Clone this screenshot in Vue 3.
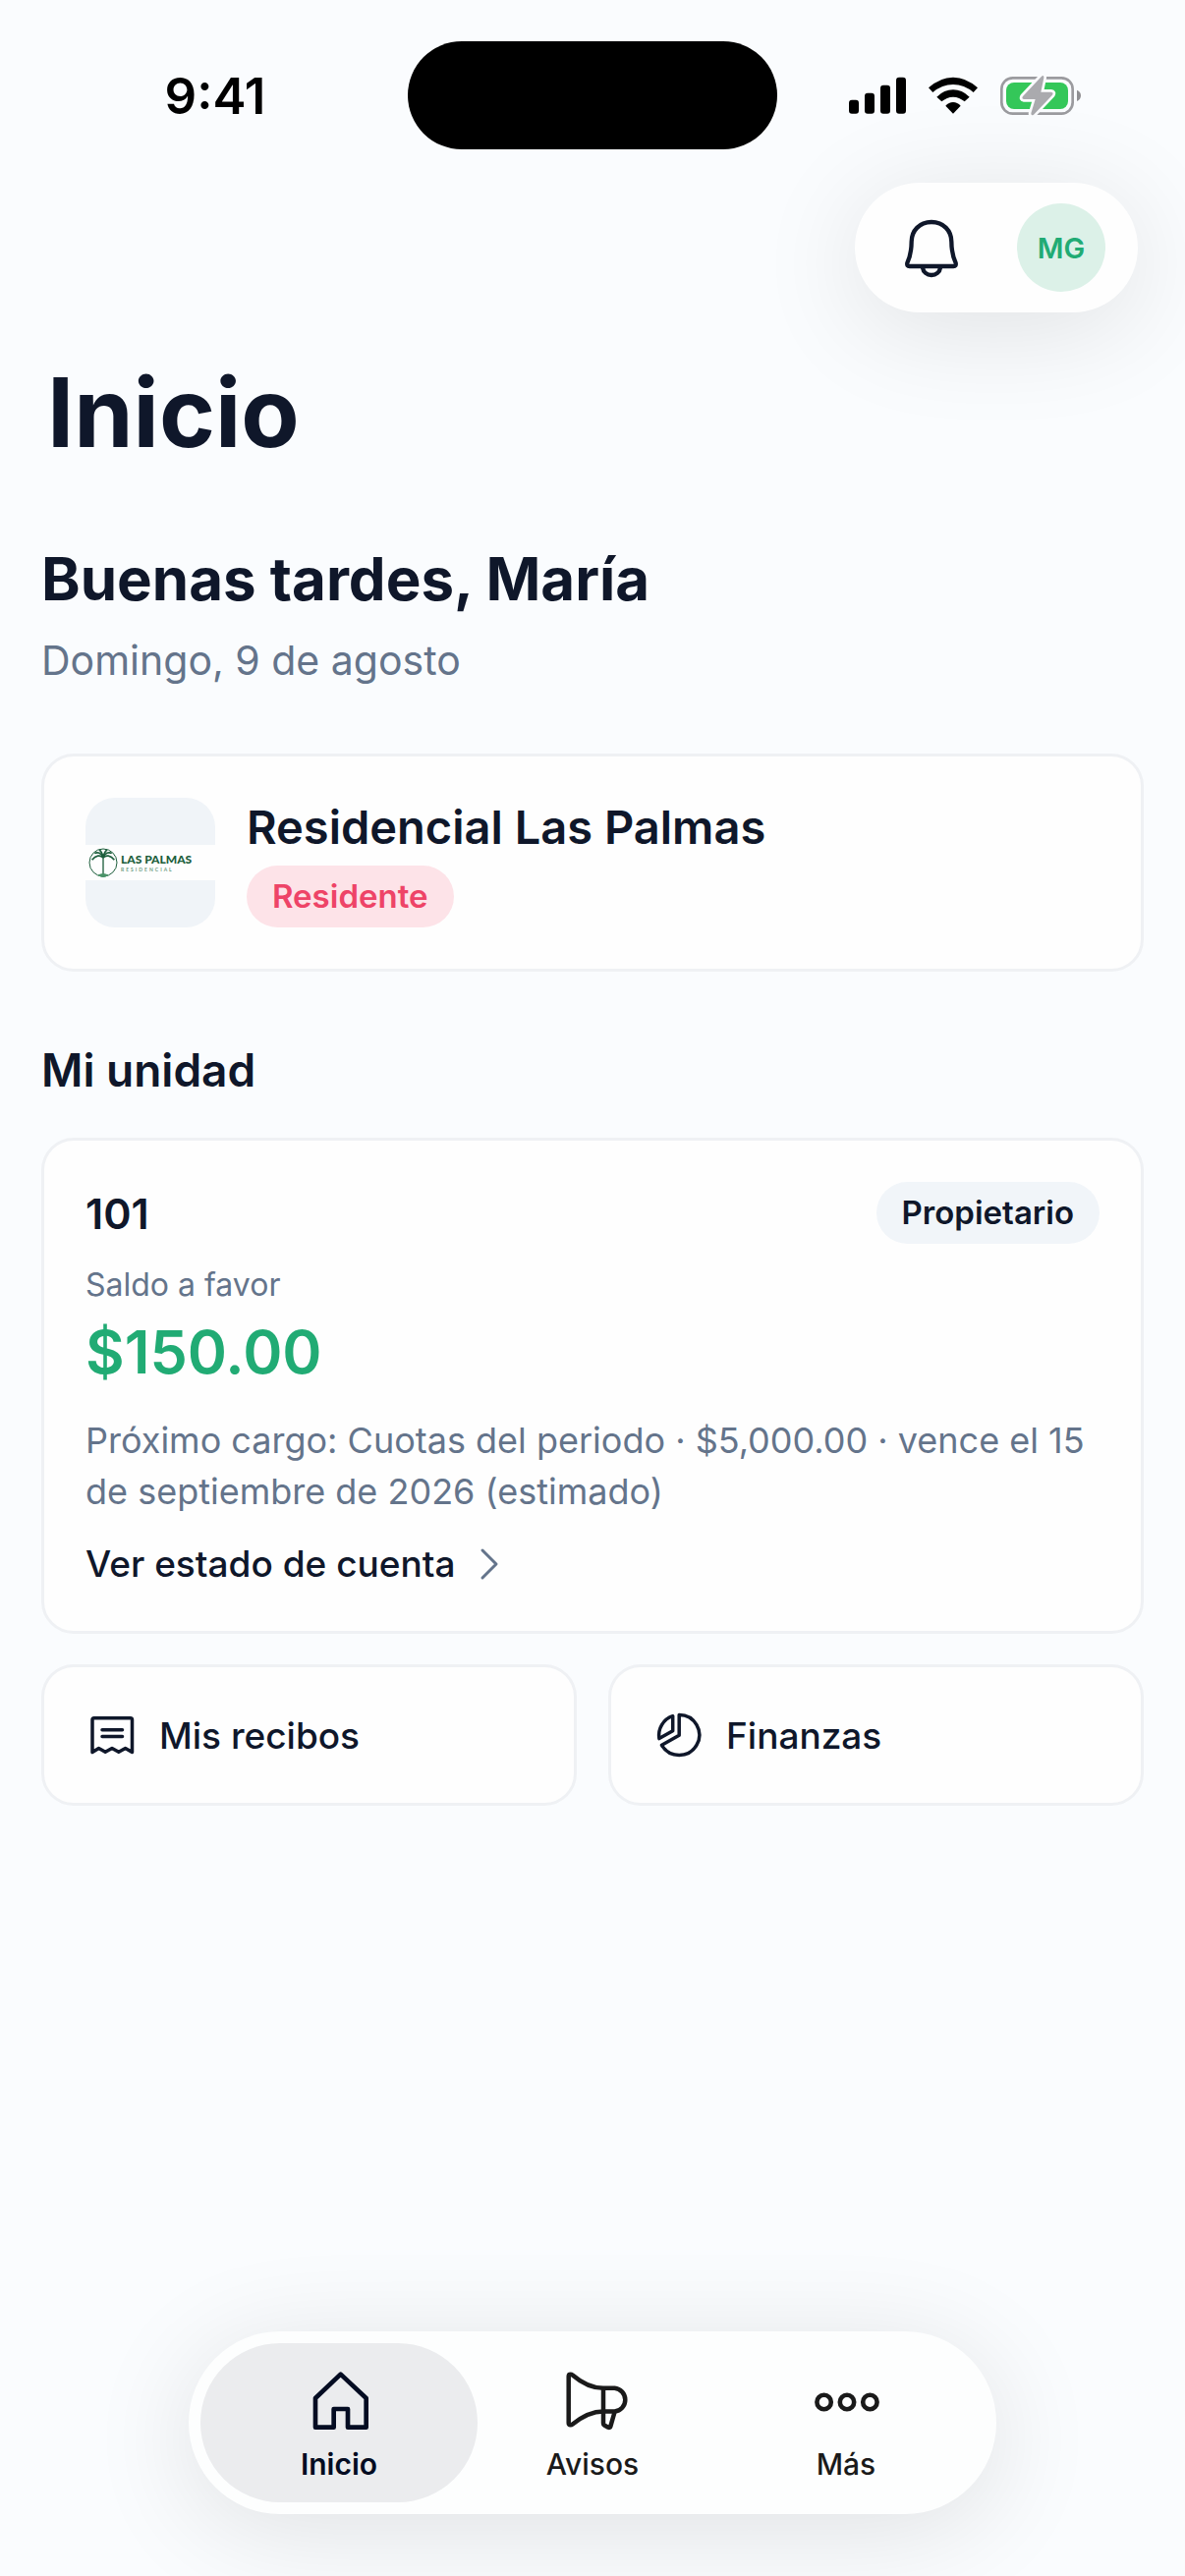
<script setup>
const tabs = [
  { id: 'inicio', label: 'Inicio', active: true },
  { id: 'avisos', label: 'Avisos', active: false },
  { id: 'mas', label: 'Más', active: false },
]
const fronds = [
  'M105 217C97 208 82 209 71 224',
  'M105 217C100 203 88 198 79 204',
  'M105 217C103 206 99 197 93 193',
  'M105 217C107 206 111 197 117 193',
  'M105 217C110 203 122 198 131 204',
  'M105 217C113 208 128 209 139 224',
]
</script>

<template>
  <div class="screen">
    <div class="status">
      <span class="time">9:41</span>
      <span class="island"></span>
      <span class="signals">
        <svg width="58" height="38" viewBox="255 175 174 114" aria-hidden="true">
          <rect x="255" y="246" width="30" height="42" rx="9" />
          <rect x="303" y="225" width="30" height="63" rx="9" />
          <rect x="351" y="201" width="30" height="87" rx="9" />
          <rect x="399" y="177" width="30" height="111" rx="9" />
        </svg>
        <svg width="50" height="38" viewBox="497 175 150 114" aria-hidden="true">
          <path d="M497 209Q532 177 572 177Q612 177 647 209L634 223Q606 199 572 199Q538 199 510 223Z" />
          <path d="M522 237Q545 215 572 215Q599 215 622 237L607 251Q591 237 572 237Q553 237 537 251Z" />
          <path d="M549 264Q559 253 572 253Q585 253 595 264L572 288Z" />
        </svg>
        <svg width="82" height="42" viewBox="714 168 246 126" aria-hidden="true">
          <rect x="718" y="178" width="217" height="109" rx="34" fill="none" stroke="#9b9b9f" stroke-width="8" />
          <rect x="732" y="192" width="189" height="81" rx="24" fill="#34c759" />
          <path d="M948 215Q960 220 960 232Q960 244 948 249Z" fill="#8f8f92" />
          <path d="M840 173Q848 168 847 178L838 221H869Q878 222 873 230L816 290Q808 295 808 286L821 243H786Q778 242 783 234Z" fill="#aaaaae" stroke="#fbfcfe" stroke-width="16" paint-order="stroke" />
        </svg>
      </span>
    </div>

    <header class="top">
      <div class="actions">
        <button class="bell" type="button" aria-label="Notificaciones">
          <svg width="56" height="62" viewBox="420 600 168 186" fill="none" stroke="currentColor" stroke-width="13" stroke-linejoin="round" stroke-linecap="round">
            <path d="M504 615C467 615 443 642 443 675C443 705 440 718 430 740Q428 750 437 750H571Q580 750 578 740C568 718 565 705 565 675C565 642 541 615 504 615Z" />
            <path d="M477 754C479 768 490 777 504 777C518 777 529 768 531 754" />
          </svg>
        </button>
        <button class="avatar" type="button">MG</button>
      </div>
      <h1>Inicio</h1>
    </header>

    <main>
      <h2 class="greeting">Buenas tardes, María</h2>
      <p class="date">Domingo, 9 de agosto</p>

      <section class="card community">
        <div class="logo">
          <div class="brand">
            <svg width="30" height="32" viewBox="60 184 90 96" fill="none" stroke="#1d5e3c" stroke-width="5" aria-hidden="true">
              <circle cx="105" cy="232" r="42" stroke-width="3" />
              <path v-for="d in fronds" :key="d" :d="d" />
              <path d="M105 217V268" stroke-width="4" />
              <path d="M90 270Q105 263 120 270Q105 281 90 270Z" fill="#4c9469" stroke="#4c9469" stroke-width="3" />
            </svg>
            <div class="brand-text">
              <span class="brand-name">LAS PALMAS</span>
              <span class="brand-sub">RESIDENCIAL</span>
            </div>
          </div>
        </div>
        <div class="community-text">
          <h3>Residencial Las Palmas</h3>
          <span class="pill rose">Residente</span>
        </div>
      </section>

      <h2 class="section-title">Mi unidad</h2>

      <section class="card unit">
        <div class="unit-head">
          <h3>101</h3>
          <span class="pill slate">Propietario</span>
        </div>
        <p class="caption">Saldo a favor</p>
        <p class="amount">$150.00</p>
        <p class="next">Próximo cargo: Cuotas del periodo · $5,000.00 · vence el 15 de septiembre de 2026 (estimado)</p>
        <a class="statement" href="#estado">
          Ver estado de cuenta
          <svg width="20" height="34" viewBox="0 0 20 34" fill="none" stroke="#64748b" stroke-width="3" stroke-linecap="round" stroke-linejoin="round" aria-hidden="true">
            <path d="M3 3L17 17L3 31" />
          </svg>
        </a>
      </section>

      <div class="tiles">
        <a class="card tile" href="#recibos">
          <svg width="54" height="44" viewBox="57 324 54 44" fill="none" stroke="currentColor" stroke-width="3.500" stroke-linejoin="round" stroke-linecap="round" aria-hidden="true">
            <path d="M64 363.500V330.500Q64 328.700 65.800 328.700H102.700Q104.500 328.700 104.500 330.500V363.500L97.600 359.500L90.800 363.300L84 359.500L77.200 363.300L70.500 359.500Z" />
            <path d="M74 340.700H94.500M74 347.500H94.500" />
          </svg>
          Mis recibos
        </a>
        <a class="card tile" href="#finanzas">
          <svg width="54" height="48" viewBox="64 102 54 48" fill="none" stroke="currentColor" stroke-width="3.500" stroke-linejoin="round" aria-hidden="true">
            <path d="M91.200 105.500A20.500 20.500 0 1 1 73.500 136.300L91.200 126.300Z" />
            <path d="M84.700 106.700V121.700L70.900 129.600A20.500 20.500 0 0 1 84.700 106.700Z" />
          </svg>
          Finanzas
        </a>
      </div>
    </main>

    <nav class="tabbar">
      <button v-for="tab in tabs" :key="tab.id" type="button" class="tab" :class="{ active: tab.active }">
        <svg v-if="tab.id === 'inicio'" width="61" height="64" viewBox="494 218 183 192" fill="none" stroke="currentColor" stroke-width="14" stroke-linejoin="round">
          <path d="M589 232L512 305V394H568V338H611V394H667V305Z" />
        </svg>
        <svg v-else-if="tab.id === 'avisos'" width="72" height="64" viewBox="37 72.500 72 64" fill="none" stroke="currentColor" stroke-width="4.500" stroke-linejoin="round">
          <path d="M48.700 79.500Q48.700 77.300 50.600 77.300Q51.800 77.300 52.700 78C62 86 73 91.300 84 91.300H95.500A11.900 11.900 0 0 1 95.500 115H84C73 115 62 120.500 52.700 128Q51.800 128.700 50.600 128.700Q48.700 128.700 48.700 126.500Z" />
          <path d="M84 91.300V127Q84 128.300 85 129L89 131.200Q90.800 132 91.400 130L95.700 115" />
        </svg>
        <svg v-else width="68" height="64" viewBox="297 72.500 68 64" fill="none" stroke="currentColor" stroke-width="4.600">
          <circle cx="308.600" cy="105.500" r="7.200" />
          <circle cx="332" cy="105.500" r="7.200" />
          <circle cx="355.400" cy="105.500" r="7.200" />
        </svg>
        <span>{{ tab.label }}</span>
      </button>
    </nav>
  </div>
</template>

<style>
body {
  margin: 0;
  background: #fafcfe;
}
</style>

<style scoped>
.screen {
  display: flex;
  flex-direction: column;
  min-height: 100vh;
  box-sizing: border-box;
  padding-bottom: 63px;
  overflow: hidden;
  background: #fafcfe;
  color: #0f172a;
  font-family: Inter, "Liberation Sans", sans-serif;
}

h1, h2, h3, p {
  margin: 0;
}

button {
  border: 0;
  padding: 0;
  background: none;
  font-family: inherit;
}

a {
  color: inherit;
  text-decoration: none;
}

svg {
  display: block;
  flex: none;
}

.status {
  display: grid;
  grid-template-columns: 1fr 376px 1fr;
  align-items: center;
  height: 110px;
  padding: 42px 0 34px;
  color: #000;
}

.time {
  padding-left: 23px;
  text-align: center;
  font-size: 51px;
  font-weight: 600;
}

.island {
  height: 110px;
  border-radius: 55px;
  background: #000;
}

.signals {
  display: flex;
  align-items: center;
  justify-content: center;
  gap: 23px;
  padding-right: 33px;
}

.top {
  padding: 0 48px;
}

.actions {
  display: flex;
  align-items: center;
  justify-content: space-between;
  box-sizing: border-box;
  width: 288px;
  height: 132px;
  margin-left: auto;
  padding: 0 33px 0 50px;
  border-radius: 66px;
  background: #fefefe;
  box-shadow: 0 16px 110px rgba(0, 0, 0, 0.11);
}

.bell {
  color: #0f172a;
}

.avatar {
  width: 90px;
  height: 90px;
  border-radius: 50%;
  background: #dcf1e8;
  color: #21ab74;
  font-size: 29px;
  font-weight: 600;
}

h1 {
  margin-top: 42px;
  font-size: 97px;
  line-height: 120px;
  font-weight: 700;
}

main {
  padding: 70px 42px;
}

.greeting {
  font-size: 60px;
  line-height: 78px;
  font-weight: 700;
}

.date {
  margin-top: 17px;
  color: #64748b;
  font-size: 41px;
  line-height: 54px;
}

.card {
  box-sizing: border-box;
  border: 3px solid #eff1f4;
  border-radius: 33px;
  padding: 42px;
  background: #fefefe;
}

.community {
  display: flex;
  gap: 32px;
  margin-top: 68px;
}

.logo {
  display: flex;
  align-items: center;
  width: 132px;
  height: 132px;
  border-radius: 30px;
  overflow: hidden;
  background: #f0f4f8;
}

.brand {
  display: flex;
  align-items: center;
  gap: 3px;
  width: 100%;
  height: 36px;
  padding-left: 3px;
  background: #fefefe;
}

.brand-text {
  display: flex;
  flex-direction: column;
  gap: 2px;
  color: #1d5e3c;
  font-family: Lato, sans-serif;
  white-space: nowrap;
}

.brand-name {
  font-size: 12px;
  line-height: 12px;
  font-weight: 900;
}

.brand-sub {
  color: #6c9c82;
  font-size: 5px;
  line-height: 5px;
  font-weight: 700;
  letter-spacing: 2px;
}

.community-text {
  display: flex;
  flex-direction: column;
  align-items: flex-start;
  gap: 9px;
}

.community-text h3 {
  font-size: 47px;
  line-height: 60px;
  font-weight: 600;
}

.pill {
  padding: 0 26px;
  border-radius: 32px;
  font-size: 33px;
  line-height: 63px;
  font-weight: 600;
}

.rose {
  background: #fde3e8;
  color: #ee4467;
}

.slate {
  background: #f1f5f9;
  color: #0f172a;
}

.section-title {
  margin: 70px 0 39px;
  font-size: 46px;
  line-height: 60px;
  font-weight: 600;
}

.unit-head {
  display: flex;
  align-items: center;
  justify-content: space-between;
}

.unit-head h3 {
  font-size: 43px;
  line-height: 60px;
  font-weight: 600;
}

.caption {
  margin-top: 22px;
  color: #64748b;
  font-size: 32px;
  line-height: 40px;
}

.amount {
  margin-top: 9px;
  color: #21ab74;
  font-size: 61px;
  line-height: 78px;
  font-weight: 600;
}

.next {
  margin-top: 25px;
  color: #64748b;
  font-size: 36px;
  line-height: 52px;
}

.statement {
  display: flex;
  align-items: center;
  gap: 24px;
  margin-top: 22px;
  font-size: 37px;
  line-height: 52px;
  font-weight: 500;
}

.tiles {
  display: grid;
  grid-template-columns: 1fr 1fr;
  gap: 32px;
  margin-top: 31px;
}

.tile {
  display: flex;
  align-items: center;
  gap: 21px;
  height: 144px;
  font-size: 37px;
  font-weight: 500;
}

.tabbar {
  display: flex;
  align-self: center;
  margin-top: auto;
  padding: 12px;
  border-radius: 93px;
  background: #fdfefe;
  box-shadow: 0 16px 110px rgba(0, 0, 0, 0.11);
}

.tab {
  display: flex;
  flex-direction: column;
  align-items: center;
  gap: 12px;
  box-sizing: border-box;
  width: 282px;
  height: 162px;
  padding-top: 27px;
  border-radius: 81px;
  color: #1a1a1a;
  font-size: 30px;
  line-height: 40px;
  font-weight: 500;
}

.tab + .tab {
  margin-left: -24px;
}

.tab.active {
  background: #ebecee;
  color: #040c22;
  font-weight: 600;
}
</style>
